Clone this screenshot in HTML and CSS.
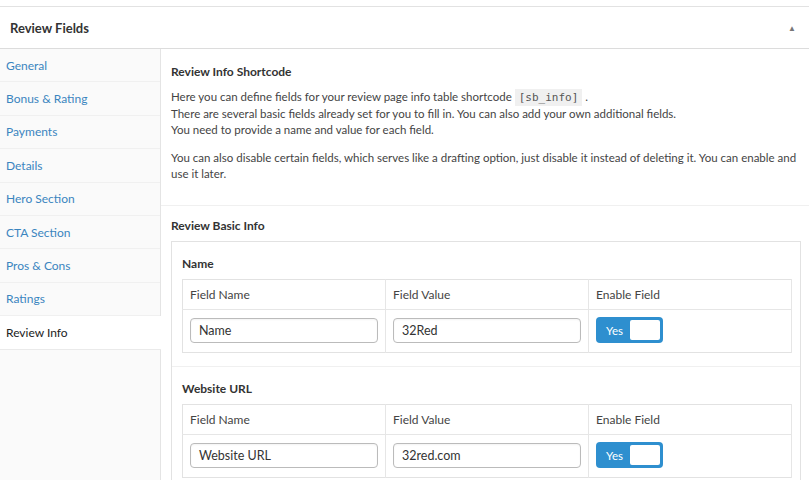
FILE: index.html
```html
<!DOCTYPE html>
<html>
<head>
<meta charset="utf-8">
<link rel="stylesheet" href="styles.css">
</head>
<body>
<div class="postbox">
  <div class="postbox-header">
    <h2 class="postbox-title">Review Fields</h2>
    <span class="toggle-arrow">&#9650;</span>
  </div>
  <div class="postbox-body">
    <ul class="tabs">
      <li class="tab"><a>General</a></li>
      <li class="tab"><a>Bonus &amp; Rating</a></li>
      <li class="tab"><a>Payments</a></li>
      <li class="tab"><a>Details</a></li>
      <li class="tab"><a>Hero Section</a></li>
      <li class="tab"><a>CTA Section</a></li>
      <li class="tab"><a>Pros &amp; Cons</a></li>
      <li class="tab"><a>Ratings</a></li>
      <li class="tab active"><a>Review Info</a></li>
      <li class="tab-fill"></li>
    </ul>
    <div class="panel">
      <div class="intro">
        <h3 class="section-title">Review Info Shortcode</h3>
        <p class="desc">Here you can define fields for your review page info table shortcode <code>[sb_info]</code> .<br>There are several basic fields already set for you to fill in. You can also add your own additional fields.<br>You need to provide a name and value for each field.</p>
        <p class="desc wide">You can also disable certain fields, which serves like a drafting option, just disable it instead of deleting it. You can enable and<br>use it later.</p>
      </div>
      <div class="basic">
        <h3 class="section-title">Review Basic Info</h3>
        <div class="group">
          <div class="field-block">
            <h4 class="field-title">Name</h4>
            <table class="ftable">
              <thead><tr><th>Field Name</th><th>Field Value</th><th>Enable Field</th></tr></thead>
              <tbody><tr>
                <td><div class="input">Name</div></td>
                <td><div class="input">32Red</div></td>
                <td><div class="switch"><span class="yes">Yes</span><span class="knob"></span></div></td>
              </tr></tbody>
            </table>
          </div>
          <div class="field-block">
            <h4 class="field-title">Website URL</h4>
            <table class="ftable">
              <thead><tr><th>Field Name</th><th>Field Value</th><th>Enable Field</th></tr></thead>
              <tbody><tr>
                <td><div class="input">Website URL</div></td>
                <td><div class="input">32red.com</div></td>
                <td><div class="switch"><span class="yes">Yes</span><span class="knob"></span></div></td>
              </tr></tbody>
            </table>
          </div>
        </div>
      </div>
    </div>
  </div>
</div>
</body>
</html>
```
FILE: styles.css
```css
html, body { margin: 0; padding: 0; background: #fff; }
body {
  font-family: Lato, "Open Sans", sans-serif;
  font-size: 12px;
  color: #444;
  overflow: hidden;
  height: 480px;
}
.postbox {
  margin-top: 6px;
  border-top: 1px solid #e2e2e2;
  background: #fff;
}
.postbox-header {
  height: 41px;
  display: flex;
  align-items: center;
  justify-content: space-between;
  padding: 0 13px 0 10px;
  border-bottom: 1px solid #dcdcdc;
}
.postbox-title {
  margin: 0;
  font-size: 13px;
  font-weight: 700;
  color: #333;
}
.toggle-arrow { font-size: 8px; color: #777; }
.postbox-body { display: flex; }
.tabs {
  list-style: none;
  margin: 0;
  padding: 0;
  width: 160px;
  flex: none;
  display: flex;
  flex-direction: column;
  background: #fafafa;
  border-right: 1px solid #e4e4e4;
  min-height: 440px;
}
.tab {
  height: 32.4px;
  display: flex;
  align-items: center;
  padding-left: 6px;
  border-bottom: 1px solid #f0f0f0;
  font-size: 12px;
}
.tab a { color: #3a85bf; }
.tab.active {
  background: #fff;
  margin-right: -1px;
  border-bottom: 1px solid #eaeaea;
}
.tab.active a { color: #222; }
.tab-fill { flex: 1; }
.panel { flex: 1; min-width: 0; }
.intro {
  padding: 15px 0 23px 10px;
  border-bottom: 1px solid #f0f0f0;
}
.section-title {
  margin: 0;
  font-size: 12px;
  font-weight: 700;
  color: #333;
}
.desc {
  margin: 10px 0 0;
  line-height: 16px;
  font-size: 11.5px;
  color: #444;
}
.desc + .desc { margin-top: 12px; }
.desc.wide { margin-right: -8px; }
code {
  font-family: "DejaVu Sans Mono", monospace;
  font-size: 11px;
  background: #f0f0f0;
  padding: 2px 4px;
  color: #555;
}
.basic { padding: 12px 8px 0 10px; }
.group {
  margin-top: 8px;
  border: 1px solid #e2e2e2;
  border-bottom: none;
}
.field-block {
  padding: 14px 8px 13px 10px;
  border-bottom: 1px solid #f0f0f0;
}
.field-title {
  margin: 0 0 8px;
  font-size: 12px;
  font-weight: 700;
  color: #333;
}
.ftable {
  width: 100%;
  border-collapse: collapse;
  border: 1px solid #e2e2e2;
  table-layout: fixed;
}
.ftable th {
  text-align: left;
  font-weight: 400;
  color: #444;
  height: 29px;
  padding: 0 7px;
  border-right: 1px solid #e6e6e6;
  border-bottom: 1px solid #e6e6e6;
  font-size: 12px;
}
.ftable td {
  padding: 7px 7px 9px;
  border-right: 1px solid #e6e6e6;
  height: 25px;
}
.input {
  box-sizing: border-box;
  height: 25px;
  border: 1px solid #bbb;
  border-radius: 4px;
  padding: 0 8px;
  display: flex;
  align-items: center;
  font-size: 12.5px;
  color: #333;
  box-shadow: inset 0 1px 2px rgba(0,0,0,0.05);
}
.switch {
  width: 67px;
  height: 26px;
  box-sizing: border-box;
  background: #2e8fcf;
  border-radius: 4px;
  display: flex;
  align-items: center;
  padding: 3px;
}
.yes {
  color: #fff;
  font-size: 11.5px;
  width: 31px;
  text-align: center;
}
.knob {
  flex: 1;
  height: 20px;
  background: #fff;
  border-radius: 2px;
}
```
